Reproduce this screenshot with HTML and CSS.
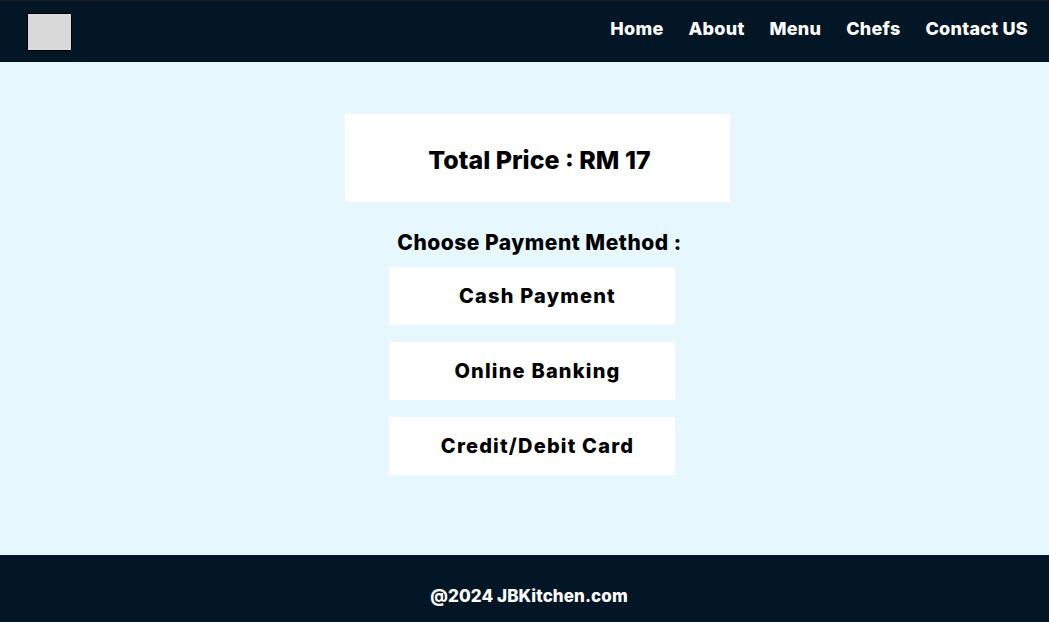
FILE: index.html
```html
<!DOCTYPE html>
<html lang="en">
<head>
<meta charset="utf-8">
<title>JBKitchen - Payment</title>
<link rel="stylesheet" href="styles.css">
</head>
<body>
<header class="site-header">
  <div class="logo"></div>
  <nav class="nav">
    <a href="#">Home</a>
    <a href="#">About</a>
    <a href="#">Menu</a>
    <a href="#">Chefs</a>
    <a href="#">Contact US</a>
  </nav>
</header>
<main class="content">
  <div class="total">Total Price : RM 17</div>
  <h2 class="choose">Choose Payment Method :</h2>
  <div class="methods">
    <button class="method">Cash Payment</button>
    <button class="method">Online Banking</button>
    <button class="method">Credit/Debit Card</button>
  </div>
</main>
<footer class="site-footer">@2024 JBKitchen.com</footer>
</body>
</html>
```
FILE: styles.css
```css
* { box-sizing: border-box; }
html, body { margin: 0; padding: 0; }
body {
  font-family: "Inter", "Noto Sans", sans-serif;
  font-weight: 800;
  background: #e6f7fe;
  color: #000;
  height: 622px;
  display: flex;
  flex-direction: column;
}
.site-header {
  height: 62px;
  background: #031626;
  border-top: 1px solid #1b1b1b;
  display: flex;
  align-items: center;
  justify-content: space-between;
  padding: 0 21px 0 27px;
}
.logo {
  width: 45px;
  height: 38px;
  background: #d9d9d9;
  border: 1px solid #000;
  margin-top: 1px;
}
.nav {
  display: flex;
  gap: 25px;
  margin-top: -6px;
}
.nav a {
  color: #fff;
  text-decoration: none;
  font-size: 18px;
  font-weight: 800;
  letter-spacing: 0.25px;
}
.content {
  flex: 1;
  display: flex;
  flex-direction: column;
  align-items: center;
  padding-top: 52px;
  padding-left: 26px;
}
.total {
  width: 385px;
  height: 88px;
  background: #fff;
  display: flex;
  align-items: center;
  justify-content: center;
  padding-top: 3px;
  padding-left: 4px;
  font-size: 25px;
  font-weight: 800;
  letter-spacing: 0;
}
.choose {
  margin: 26px 0 0 4px;
  font-size: 21px;
  font-weight: 800;
  letter-spacing: 0.5px;
  line-height: 30px;
}
.methods {
  display: flex;
  flex-direction: column;
  gap: 17px;
  margin-top: 9px;
  margin-left: -12px;
}
.method {
  width: 286px;
  height: 58px;
  background: #fff;
  border: none;
  font-family: inherit;
  font-size: 20px;
  font-weight: 800;
  letter-spacing: 1.2px;
  color: #000;
  padding: 0 0 0 12px;
}
.site-footer {
  height: 67px;
  background: #031626;
  color: #fff;
  font-size: 17px;
  font-weight: 800;
  letter-spacing: 0.1px;
  display: flex;
  align-items: center;
  justify-content: center;
  padding-left: 9px;
  padding-top: 14px;
}
```
